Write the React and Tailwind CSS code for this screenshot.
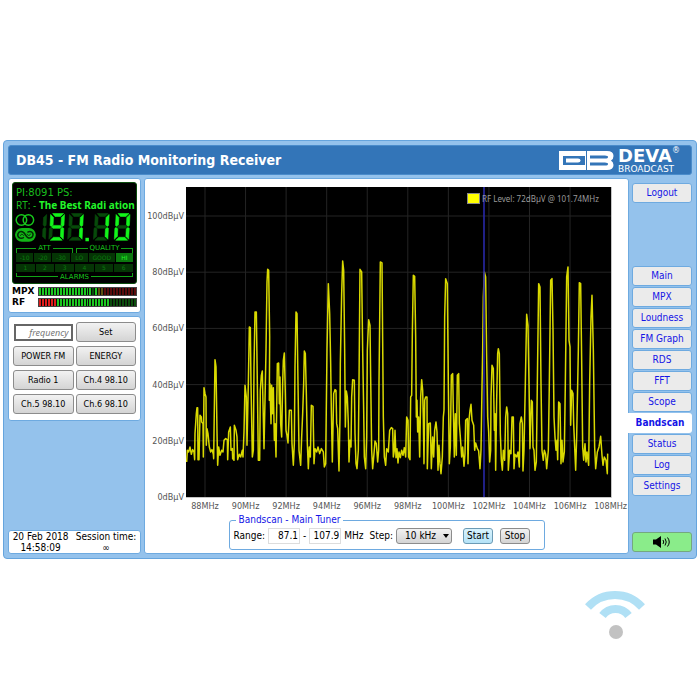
import React, { useState } from 'react';
import clsx from 'clsx';

const MENU = ['Main', 'MPX', 'Loudness', 'FM Graph', 'RDS', 'FFT', 'Scope', 'Bandscan', 'Status', 'Log', 'Settings'];
const PRESETS = ['POWER FM', 'ENERGY', 'Radio 1', 'Ch.4 98.10', 'Ch.5 98.10', 'Ch.6 98.10'];

const SWEEP = `20,635 22,600 26,605 30,590 34,612 38,598 42,605 44,628 45,550 49,490 51,472 53,472 54,628 57,628 60,495 64,500 65,515 69,520 70,620 72,412 75,430 78,440 79,585 81,535 84,550 88,590 92,605 96,598 100,612 101,625 105,328 108,350 111,545 113,645 116,590 120,615 125,600 129,605 132,570 137,565 142,568 143,628 146,545 151,530 153,600 157,595 158,625 162,630 163,525 168,540 171,560 173,628 178,612 182,620 187,600 189,620 192,545 195,405 199,440 201,585 205,400 208,230 211,232 213,400 217,620 220,600 222,350 225,185 229,185 232,400 235,630 239,630 241,420 244,375 247,362 249,460 252,595 255,450 258,300 261,95 263,57 266,60 269,260 268,450 270,400 273,520 275,405 277,490 280,412 283,570 285,520 288,620 290,480 292,340 296,338 298,460 300,380 302,520 305,560 308,400 310,330 313,308 316,430 318,540 321,555 324,578 328,480 334,480 336,580 340,645 343,580 345,350 348,185 351,190 354,400 357,600 362,645 365,560 368,490 371,400 373,302 376,310 379,430 382,580 385,655 388,590 391,620 394,465 399,468 402,640 405,595 410,605 414,590 419,610 424,595 430,605 433,650 437,640 438,550 441,300 445,100
449,190 452,340 454,480 457,635 461,430 465,418 468,420 470,520 473,535 475,600 477,662 480,500 481,340 485,130 488,32 491,60 494,300 496,530 499,422 502,440 505,520 507,635 510,570 513,590 515,440 518,388 523,390 525,550 528,640 531,655 535,600 537,400 540,57 545,65 548,300 551,480 553,620 557,655 560,560 562,300 566,208 570,225 572,380 575,600 578,655 582,610 585,572 589,580 593,635 596,600 597,400 601,35 606,38 608,270 610,500 613,620 617,645 620,595 625,605 629,540 634,532 638,535 640,620 643,600 645,540 648,622 651,595 654,638 657,605 661,622 665,600 669,615 673,592 677,620 680,500 684,510 686,620 690,628 692,440 695,435 697,250 700,75 704,78 707,260 709,500 711,450 713,545 716,500 719,620 722,440 725,388 728,420 730,510 732,640 734,450 737,440 741,440 742,655 746,520 751,518 754,655 758,560 761,620 764,540 768,515 771,545 774,660 777,585 780,640 783,670 787,620 790,500 792,480 794,200 797,85 802,100 805,400 808,640 811,590 814,375 818,370 820,480 823,620 826,490 829,615 832,375 836,370 838,520
841,560 845,620 848,590 852,648 855,610 857,510 862,505 864,640 867,510 870,480 873,462 876,510 881,525 884,600 887,578 892,595 896,602 900,655 903,600 906,410 908,300 910,140 913,65 917,80 920,320 923,500 926,545 929,635 932,600 933,440 936,345 940,355 943,540 945,490 947,660 950,450 953,310 955,295 958,310 961,550 964,630 967,660 970,600 974,630 977,500 980,470 983,490 985,660 989,600 993,610 996,500 1000,500 1002,655 1005,612 1010,620 1014,605 1018,650 1020,520 1024,500 1027,520 1029,662 1032,600 1036,400 1040,192 1044,225 1047,400 1050,595 1054,450 1057,455 1059,590 1062,600 1065,660 1069,635 1072,400 1076,100 1080,110 1083,400 1086,600 1090,630 1093,600 1097,612 1100,655 1105,600 1108,400 1112,90 1116,85 1119,240 1122,500 1125,560 1128,600 1131,570 1133,628 1136,455 1140,460 1143,640 1146,570 1149,635 1153,605 1156,400 1160,80 1164,50 1167,270 1170,290 1172,525 1175,420 1179,430 1181,520 1187,660 1190,560 1195,300 1198,97 1202,100 1205,330 1208,590 1211,630 1215,580 1218,635 1221,605 1226,645 1229,400 1233,200 1236,135 1240,300 1244,590 1247,655 1252,605 1257,590 1262,558 1266,615 1269,645 1273,620 1278,630 1282,670 1283,610`;

const LEVELS = [0, 20, 40, 60, 80, 100];
const FREQS = [88, 90, 92, 94, 96, 98, 100, 102, 104, 106, 108];

const yOf = (level) => 318 - level * 2.81;
const xOf = (mhz) => 60 + (mhz - 88) * 20.28;

function Panel({ className, children }) {
  return (
    <section className={clsx('rounded-[3px] border border-[#6eaae0] bg-white', className)}>
      {children}
    </section>
  );
}

function BandscanChart() {
  return (
    <svg viewBox="0 0 483 334" className="block w-full" role="img" aria-label="Bandscan">
      <rect x="41" y="8" width="425" height="310" fill="#000" />
      <g stroke="#242424">
        {LEVELS.slice(1).map((l) => (
          <line key={l} x1="41" x2="466" y1={yOf(l)} y2={yOf(l)} />
        ))}
        {FREQS.slice(0, -1).map((f) => (
          <line key={f} x1={xOf(f)} x2={xOf(f)} y1="8" y2="318" />
        ))}
      </g>
      <path d="M41 318.500H466.500V8" fill="none" stroke="#c4c4c4" />
      <g transform="translate(35 71.300) scale(.33333)">
        <polyline points={SWEEP} fill="none" stroke="#ffff00" strokeOpacity=".85" strokeWidth="4.500" strokeLinejoin="round" />
      </g>
      <line x1="339" x2="339" y1="8" y2="318" stroke="#2828a8" strokeWidth="1.600" />
      <rect x="322.500" y="14.500" width="12" height="10" fill="#ff0" stroke="#8a8a8a" />
      <text x="337" y="23" fontFamily="'Noto Sans', sans-serif" fontSize="8" fill="#9a9a9a">RF Level: 72dBµV @ 101.74MHz</text>
      <g fontFamily="'DejaVu Sans Condensed', 'Noto Sans', sans-serif" fontSize="9" fill="#555">
        {LEVELS.map((l) => (
          <text key={l} x="39" y={yOf(l) + 3} textAnchor="end">{l}dBµV</text>
        ))}
        {FREQS.map((f) => (
          <text key={f} x={xOf(f)} y="330" textAnchor="middle">{f}MHz</text>
        ))}
      </g>
    </svg>
  );
}

// a: top, b: upper right, c: lower right, d: bottom, e: lower left, f: upper left, g: middle
const SEGMENTS = {
  a: 'M3 0H14L11 3H5.500Z',
  b: 'M15 1V12L13.500 13L12 11.500V4Z',
  c: 'M13.500 14L15 15V26L12 23V15.500Z',
  d: 'M5 24H11L14 27H2Z',
  e: 'M1.500 14L3.500 15.500V23L.5 26V15Z',
  f: 'M1 1L4 4V11.500L2 13L1 12Z',
  g: 'M4 12H11.500L13 13.500L11.500 15H4L2.500 13.500Z',
};

function Digit({ x, lit, only }) {
  return (
    <g transform={`translate(${x} .5) skewX(-3)`}>
      {Object.entries(SEGMENTS)
        .filter(([name]) => !only || only.includes(name))
        .map(([name, d]) => (
          <path
            key={name}
            d={d}
            strokeWidth=".6"
            fill={lit.includes(name) ? '#12f51a' : '#074a0a'}
            stroke={lit.includes(name) ? '#12f51a' : '#074a0a'}
          />
        ))}
    </g>
  );
}

function Frequency() {
  return (
    <svg viewBox="0 0 122 30" className="block w-full" role="img" aria-label="91.10 MHz, stereo">
      <g fill="none" stroke="#17c81b" strokeWidth="1.500">
        <circle cx="7.500" cy="7" r="5.300" />
        <circle cx="14.500" cy="7" r="5.300" />
      </g>
      <rect x="1" y="15" width="21" height="14" rx="7" fill="#12b516" />
      <path d="M10 24.500C6 27 3 24 4 21C5 18 9 17.500 11.500 22C14 26.500 18 26 19 23C20 20 17 17.500 13.500 19.500" fill="none" stroke="#032b05" strokeWidth="1.500" />
      <path d="M6.500 23C7 20.500 9 21.500 10 23M13 21C14.500 23.500 16 23 16.500 21" fill="none" stroke="#032b05" />
      <Digit x={18} lit="" only="bc" />
      <Digit x={36} lit="abcdfg" />
      <Digit x={55} lit="bc" />
      <rect x="72" y="25" width="3.500" height="3.500" fill="#12f51a" />
      <Digit x={81} lit="bc" />
      <Digit x={102} lit="abcdef" />
    </svg>
  );
}

function LcdRule({ children }) {
  return (
    <span className="flex flex-1 items-center gap-[2px] text-[#17c81b]">
      <i className="mt-[4px] h-[5px] flex-1 border-l border-t border-[#12a516]" />
      {children}
      <i className="mt-[4px] h-[5px] flex-1 border-r border-t border-[#12a516]" />
    </span>
  );
}

function Lcd() {
  return (
    <div className="h-[102px] overflow-hidden rounded-[3px] border border-[#0b4d0d] bg-black px-[3px] pt-[4px] font-['DejaVu_Sans',sans-serif] text-[7px] leading-[8px]">
      <p className="whitespace-nowrap text-[10px] leading-[12px] text-[#19bd1d]">PI:8091 PS:</p>
      <p className="whitespace-nowrap font-['Noto_Sans',sans-serif] text-[10px] leading-[12px] text-[#19bd1d]">
        RT: - <b className="text-[#22f52a]">The Best Radi ation</b>
      </p>
      <div className="-mx-[2px] mt-[2px]">
        <Frequency />
      </div>
      <div className="mt-px flex gap-[3px]">
        <LcdRule>ATT</LcdRule>
        <LcdRule>QUALITY</LcdRule>
      </div>
      <div className="flex gap-px text-center text-[6px] leading-[9px] text-[#0b7a0e]">
        {['-10', '-20', '-30', 'LO', 'GOOD', 'HI'].map((t) => (
          <span
            key={t}
            className={clsx('h-[9px]', t === 'GOOD' ? 'w-[26px]' : 'flex-1', t === 'HI' ? 'bg-[#0b780e] text-[#22f52a]' : 'bg-[#053505]')}
          >
            {t}
          </span>
        ))}
      </div>
      <div className="mt-[2px] flex gap-px text-center text-[6px] leading-[8px] text-[#0b7a0e]">
        {[1, 2, 3, 4, 5, 6].map((n) => (
          <span key={n} className="h-[8px] flex-1 bg-[#053505]">{n}</span>
        ))}
      </div>
      <div className="mt-px flex items-center gap-[2px] text-[#17c81b]">
        <i className="mb-[4px] h-[4px] flex-1 border-b border-l border-[#12a516]" />
        ALARMS
        <i className="mb-[4px] h-[4px] flex-1 border-b border-r border-[#12a516]" />
      </div>
    </div>
  );
}

function Meter({ label, colorAt }) {
  return (
    <div className="flex h-[11px] items-center">
      <span className="w-[26px] font-['DejaVu_Sans',sans-serif] text-[9px] font-bold leading-[11px] text-black">{label}</span>
      <div className="flex h-[9px] flex-1 gap-px border border-[#444] bg-[#0a0a0a]">
        {Array.from({ length: 33 }, (_, i) => (
          <i key={i} className={clsx('flex-1', colorAt(i))} />
        ))}
      </div>
    </div>
  );
}

const mpxColor = (i) => {
  if (i < 18 || i === 19) return 'bg-[#1cc820]';
  if (i === 18) return 'bg-[#0b4d0d]';
  return i < 22 ? 'bg-[#5f5210]' : 'bg-[#5a0c0c]';
};

const rfColor = (i) => {
  if (i < 6) return 'bg-[#e01c1c]';
  return i < 24 ? 'bg-[#1cc820]' : 'bg-[#0b4d0d]';
};

const greyButton = 'rounded-[3px] border border-[#8c8c8c] bg-linear-to-b from-[#f2f2f2] to-[#d4d4d4] text-black';

function DevaLogo() {
  return (
    <div className="flex items-center gap-[4px] text-white">
      <svg viewBox="0 0 55 19" className="block h-[19px] w-[55px]" aria-hidden="true">
        <path d="M0 0H48Q54.500 0 54.500 5Q54.500 8 52 9.500Q54.500 11 54.500 14Q54.500 19 48 19H0Z" fill="#fff" />
        <path d="M4 5H26V14H4Z" fill="#3375b8" />
        <path d="M7 7.500H19Q21.500 7.500 21.500 9.500Q21.500 11.500 19 11.500H7Z" fill="#fff" />
        <path d="M31 4.500H46Q49 4.500 49 6Q49 7.500 46 7.500H31ZM31 11.500H46Q49 11.500 49 13Q49 14.500 46 14.500H31ZM27 0H28V19H27Z" fill="#3375b8" />
      </svg>
      <div className="w-[68px] font-['DejaVu_Sans',sans-serif]">
        <p className="flex text-[18px] font-bold leading-[17px]">
          DEVA<sup className="top-0 text-[8px] font-normal leading-[8px]">®</sup>
        </p>
        <p className="text-[9px] leading-[10px]">BROADCAST</p>
      </div>
    </div>
  );
}

export default function App() {
  const [page, setPage] = useState('Bandscan');

  return (
    <div className="min-h-screen bg-white pt-[140px] font-['DejaVu_Sans_Condensed','Noto_Sans',sans-serif] text-[10px] leading-[12px] text-black">
      <main className="mx-[3px] flex flex-col gap-[3px] rounded-[4px] border border-[#65a4dd] bg-[#94c2ec] p-[4px]">
        <header className="flex h-[30px] items-center justify-between rounded-[3px] border border-[#4a8ccb] bg-[#3375b8] pl-[7px] pr-[5px]">
          <h1 className="text-[14px] font-bold leading-[18px] text-white">DB45 - FM Radio Monitoring Receiver</h1>
          <DevaLogo />
        </header>

        <div className="flex gap-[3px]">
          <aside className="flex w-[133px] shrink-0 flex-col gap-[3px]">
            <Panel className="px-[3px] pb-[4px] pt-[3px]">
              <Lcd />
              <div className="mt-[2px]">
                <Meter label="MPX" colorAt={mpxColor} />
                <Meter label="RF" colorAt={rfColor} />
              </div>
            </Panel>

            <Panel className="grid grid-cols-2 gap-x-[2px] gap-y-[4px] px-[4px] pb-[6px] pt-[5px] text-[9px]">
              <input
                aria-label="frequency"
                placeholder="frequency"
                className="mx-[1px] mt-[2px] h-[17px] min-w-0 border-2 border-[#666] px-[2px] text-right font-['Noto_Sans',sans-serif] italic outline-none placeholder:text-[#777]"
              />
              <button type="button" className={clsx(greyButton, 'h-[20px]')}>Set</button>
              {PRESETS.map((name) => (
                <button key={name} type="button" className={clsx(greyButton, 'h-[20px] whitespace-nowrap')}>{name}</button>
              ))}
            </Panel>

            <Panel className="mt-auto flex items-center justify-around text-center leading-[11px]">
              <p>20 Feb 2018<br />14:58:09</p>
              <p>Session time:<br />∞</p>
            </Panel>
          </aside>

          <Panel className="min-w-0 flex-1 pb-[3px]">
            <BandscanChart />
            <fieldset className="mx-auto mt-[1px] flex h-[36px] w-[316px] items-center rounded-[3px] border border-[#6eaae0] px-[4px] pb-[4px]">
              <legend className="ml-[2px] px-[3px] leading-[12px] text-[#1414e6]">Bandscan - Main Tuner</legend>
              <div className="flex items-center whitespace-nowrap">
                <label htmlFor="from">Range:</label>
                <input id="from" defaultValue="87.1" className="ml-[3px] h-[16px] w-[32px] border border-[#ddd] px-[1px] text-right" />
                <span className="mx-[3px]">-</span>
                <input aria-label="Range end" defaultValue="107.9" className="h-[16px] w-[32px] border border-[#ddd] px-[1px] text-right" />
                <span className="ml-[3px]">MHz</span>
                <label htmlFor="step" className="ml-[6px]">Step:</label>
                <span className="relative ml-[3px]">
                  <select id="step" className={clsx(greyButton, 'block h-[16px] w-[56px] appearance-none pl-[8px]')}>
                    <option>10 kHz</option>
                    <option>50 kHz</option>
                    <option>100 kHz</option>
                  </select>
                  <svg viewBox="0 0 6 4" className="pointer-events-none absolute right-[3px] top-[6px] h-[4px] w-[6px]" aria-hidden="true">
                    <path d="M0 0H6L3 4Z" />
                  </svg>
                </span>
                <button type="button" className="ml-[11px] h-[16px] w-[30px] rounded-[3px] border border-[#6c9bb5] bg-linear-to-b from-[#d9f3fd] to-[#b4e2f7]">Start</button>
                <button type="button" className={clsx(greyButton, 'ml-[7px] h-[16px] w-[30px]')}>Stop</button>
              </div>
            </fieldset>
          </Panel>

          <nav className="flex w-[60px] shrink-0 flex-col pb-[2px] pt-[5px] text-[#1414e6]">
            <button type="button" className="h-[20px] rounded-[3px] border border-[#6eaae0] bg-[#ebebeb]">Logout</button>
            <div className="mt-[63px] flex flex-col gap-[1px]">
              {MENU.map((item) => (
                <button
                  key={item}
                  type="button"
                  onClick={() => setPage(item)}
                  className={clsx(
                    'h-[20px] whitespace-nowrap',
                    item === page
                      ? '-ml-[4px] rounded-r-[3px] bg-white font-bold'
                      : 'rounded-[3px] border border-[#6eaae0] bg-[#ebebeb]'
                  )}
                >
                  {item}
                </button>
              ))}
            </div>
            <button type="button" aria-label="Listen" className="mt-auto flex h-[20px] items-center justify-center rounded-[3px] border border-[#74a87f] bg-[#8aec8a]">
              <svg viewBox="0 0 18 12" className="h-[12px] w-[18px]" aria-hidden="true">
                <path d="M0 3.500H3L8 0V12L3 8.500H0Z" />
                <path d="M10 4Q11.500 6 10 8M12 2.500Q14.500 6 12 9.500M14.500 1.500Q18 6 14.500 10.500" fill="none" stroke="#000" />
              </svg>
            </button>
          </nav>
        </div>
      </main>

      <footer className="flex justify-end pr-[55px] pt-[30px]">
        <svg viewBox="0 0 60 50" className="h-[50px] w-[60px]" role="img" aria-label="Wireless">
          <path d="M3 18A36.400 36.400 0 0 1 57 18" fill="none" stroke="#b0e0f5" strokeWidth="8" />
          <path d="M17.500 26.500A16.200 16.200 0 0 1 43.500 26.500" fill="none" stroke="#b0e0f5" strokeWidth="8" />
          <circle cx="31" cy="43" r="7" fill="#c2c2c2" />
        </svg>
      </footer>
    </div>
  );
}
